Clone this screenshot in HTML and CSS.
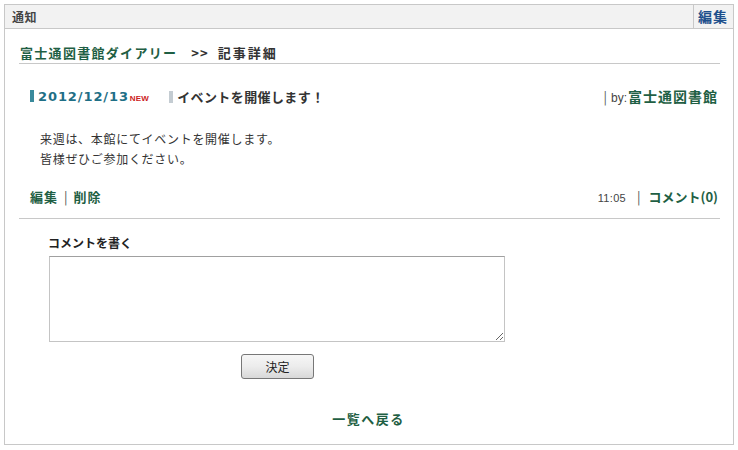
FILE: index.html
```html
<!DOCTYPE html>
<html lang="ja">
<head>
<meta charset="utf-8">
<link rel="stylesheet" href="styles.css">
</head>
<body>
<div class="panel">
  <div class="panel-head">
    <span class="panel-title">通知</span>
    <a class="panel-edit">編集</a>
  </div>
  <div class="panel-body">
    <div class="crumb"><a class="green">富士通図書館ダイアリー</a><span class="crumb-sep">&gt;&gt;</span><span class="crumb-cur">記事詳細</span></div>
    <div class="title-row">
      <div class="title-left">
        <span class="date"><i class="bar bar-teal"></i>2012/12/13<span class="new">NEW</span></span>
        <span class="subject"><i class="bar bar-gray"></i>イベントを開催します！</span>
      </div>
      <div class="title-right"><span class="pipe">|</span><span class="by">by:</span><a class="green author">富士通図書館</a></div>
    </div>
    <div class="content">
      <p>来週は、本館にてイベントを開催します。</p>
      <p>皆様ぜひご参加ください。</p>
    </div>
    <div class="foot-row">
      <div><a class="green">編集</a><span class="pipe">|</span><a class="green">削除</a></div>
      <div><span class="time">11:05</span><span class="pipe pipe-wide">|</span><a class="green comments">コメント(0)</a></div>
    </div>
    <div class="comment">
      <div class="comment-label">コメントを書く</div>
      <textarea class="comment-box"></textarea>
      <div class="btn-row"><button class="btn">決定</button></div>
    </div>
    <div class="back"><a class="green">一覧へ戻る</a></div>
  </div>
</div>
</body>
</html>
```
FILE: styles.css
```css
html, body { margin: 0; padding: 0; background: #fff; }
body {
  font-family: "Noto Sans CJK JP", "Noto Sans", sans-serif;
  font-size: 12px;
  color: #333;
}
.panel {
  margin: 4px 0 0 4px;
  width: 728px;
  height: 439px;
  border: 1px solid #c8c8c8;
  box-sizing: content-box;
}
.panel-head {
  height: 23px;
  background: #f2f2f2;
  border-bottom: 1px solid #c8c8c8;
  display: flex;
  align-items: center;
  justify-content: space-between;
}
.panel-title {
  padding-left: 7px;
  font-weight: bold;
  font-size: 12px;
  color: #444;
  letter-spacing: 0.5px;
}
.panel-edit {
  font-weight: bold;
  font-size: 14px;
  color: #1d4f8c;
  border-left: 1px solid #c8c8c8;
  height: 23px;
  line-height: 23px;
  padding: 0 5px 0 4px;
  letter-spacing: 1px;
  margin-top: -1px;
}
.panel-body {
  padding: 0 13px 0 14px;
}
.green { color: #1f5f44; font-weight: bold; letter-spacing: 1px; }
.crumb {
  margin-top: 14px;
  height: 20px;
  line-height: 20px;
  border-bottom: 1px solid #c8c8c8;
  font-size: 13px;
  font-weight: bold;
  color: #333;
  padding-left: 1px;
}
.crumb .green { letter-spacing: 1.3px; }
.crumb-cur { letter-spacing: 2px; }
.crumb-sep { margin: 0 9px 0 14px; letter-spacing: 1px; }
.title-row {
  margin-top: 22px;
  display: flex;
  justify-content: space-between;
  align-items: center;
  height: 20px;
  padding: 0 2px 0 11px;
}
.title-left { display: flex; align-items: center; }
.bar {
  display: inline-block;
  width: 4px;
  height: 12px;
  margin-right: 4px;
  vertical-align: -1px;
}
.bar-teal { background: #3a8a9c; }
.bar-gray { background: #c4ccd2; }
.date {
  font-family: "DejaVu Sans", Verdana, sans-serif;
  font-weight: bold;
  font-size: 13px;
  color: #1f6f86;
  letter-spacing: 0.9px;
}
.new {
  font-family: "Liberation Sans", Arial, sans-serif;
  font-size: 8px;
  color: #cc2222;
  font-weight: bold;
  margin-left: 1px;
  letter-spacing: 0.2px;
}
.subject {
  margin-left: 20px;
  font-weight: bold;
  font-size: 13px;
  color: #333;
  letter-spacing: 0.4px;
}
.title-right { font-size: 13px; }
.author { font-size: 14px; letter-spacing: 1px; }
.pipe { color: #555; margin: 0 6px; font-weight: normal; letter-spacing: 0; }
.title-right .pipe { margin: 0 4px 0 0; }
.pipe-wide { margin: 0 8px 0 11px; }
.by { font-family: "Liberation Sans", Arial, sans-serif; font-size: 12px; color: #444; margin-right: 1px; }
.content {
  margin-top: 23px;
  padding-left: 21px;
  line-height: 20px;
  letter-spacing: 0.7px;
}
.content p { margin: 0; }
.foot-row {
  margin-top: 17px;
  display: flex;
  justify-content: space-between;
  align-items: center;
  height: 20px;
  padding: 0 2px 0 11px;
  font-size: 13px;
}
.comments { letter-spacing: 0; }
.time { font-family: "Liberation Sans", Arial, sans-serif; font-size: 11px; color: #444; letter-spacing: 0.3px; }
.comment {
  margin-top: 12px;
  border-top: 1px solid #c8c8c8;
  padding-left: 29px;
}
.comment-label {
  margin-top: 15px;
  font-weight: bold;
  font-size: 12px;
  color: #222;
  line-height: 18px;
}
.comment-box {
  display: block;
  margin: 4px 0 0 1px;
  width: 456px;
  height: 86px;
  box-sizing: border-box;
  border: 1px solid #c4c4c4;
  border-top-color: #a0a0a0;
  resize: both;
  font-family: inherit;
}
.btn-row {
  padding-left: 193px;
  margin-top: 12px;
}
.btn {
  width: 73px;
  height: 25px;
  border: 1px solid #777;
  border-radius: 3px;
  background: linear-gradient(#f6f6f6, #ececec 50%, #d8d8d8);
  font-family: inherit;
  font-size: 12px;
  color: #222;
  padding: 0;
}
.back {
  margin-top: 30px;
  text-align: center;
  font-size: 13px;
  padding-right: 2px;
}
.back .green { letter-spacing: 1.5px; }
```
